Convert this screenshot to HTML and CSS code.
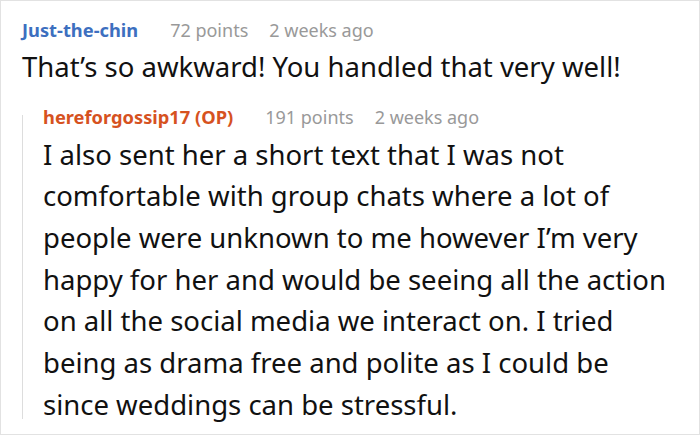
FILE: index.html
```html
<!DOCTYPE html>
<html>
<head>
<meta charset="utf-8">
<link rel="stylesheet" href="styles.css">
</head>
<body>
<div class="frame">
  <div class="comment">
    <div class="meta">
      <span class="author author-blue">Just-the-chin</span>
      <span class="points">72 points</span>
      <span class="time">2 weeks ago</span>
    </div>
    <p class="text text-top">That’s so awkward! You handled that very well!</p>
    <div class="reply">
      <div class="meta">
        <span class="author author-orange">hereforgossip17 (OP)</span>
        <span class="points">191 points</span>
        <span class="time">2 weeks ago</span>
      </div>
      <p class="text text-reply">I also sent her a short text that I was not comfortable with group chats where a lot of people were unknown to me however I’m very happy for her and would be seeing all the action on all the social media we interact on. I tried being as drama free and polite as I could be since weddings can be stressful.</p>
    </div>
  </div>
</div>
</body>
</html>
```
FILE: styles.css
```css
html, body {
  margin: 0;
  padding: 0;
  background: #ffffff;
}
.frame {
  box-sizing: border-box;
  width: 700px;
  height: 435px;
  border: 1px solid #e2e2e2;
  padding: 17px 23px 0 21px;
  font-family: "Noto Sans", "Open Sans", sans-serif;
  color: #111111;
}
.meta {
  display: flex;
  align-items: baseline;
  font-size: 18.3px;
  line-height: 24px;
  color: #999999;
  white-space: nowrap;
}
.author {
  font-weight: 700;
  margin-right: 32px;
}
.author-blue { color: #3d6fbf; }
.author-orange { color: #d6521f; }
.points,
.time {
  font-size: 18px;
}
.points { margin-right: 21px; }
.text {
  margin: 0;
  font-size: 27.5px;
}
.text-top {
  line-height: 40px;
  margin-top: 4.8px;
}
.reply {
  position: relative;
  margin-top: 18px;
  padding-left: 21px;
}
.reply::before {
  content: "";
  position: absolute;
  left: 0;
  top: 10px;
  bottom: 7px;
  width: 1px;
  background: #dddddd;
}
.text-reply {
  line-height: 41.7px;
  margin-top: 4.8px;
}
```
